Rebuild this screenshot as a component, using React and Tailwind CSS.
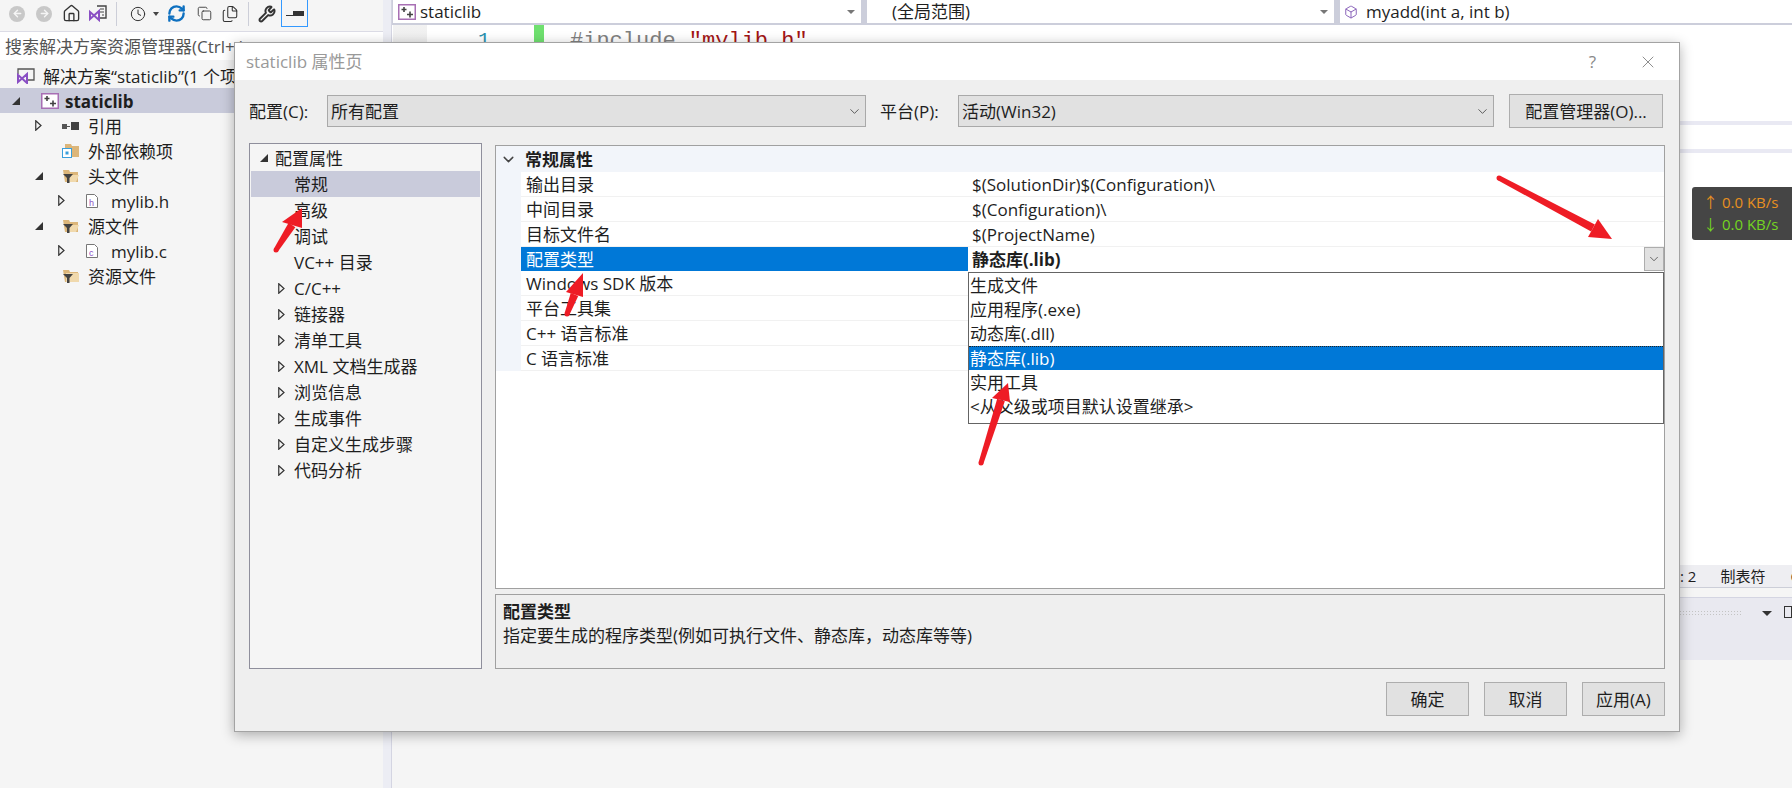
import React from "react";
import { Clock, Copy, Files, Home, RefreshCw, Wrench, ArrowLeft, ArrowRight, ChevronDown, X, Box } from "lucide-react";

const VsMark = ({ x = 0, y = 0 }) => (
  <g transform={`translate(${x} ${y})`} fill="none" stroke="#8a4fc4" strokeWidth="2">
    <path d="M1 3 L5 6.5 L1 10 Z M5 6.5 L10 2 V11 Z" />
  </g>
);

const FilterFolder = ({ open = true }) => (
  <svg width="18" height="16" viewBox="0 0 18 16">
    <path d="M1 2h6l1 2h8v10H3z" fill="#dcb67a" />
    <path d={open ? "M5 7h12l-3 7H5z" : "M4 5h13v9H4z"} fill="#f0d9ad" />
    <path d="M1 6h10L7.5 10v5H5v-5z" fill="#424242" />
  </svg>
);

const ExtFolder = () => (
  <svg width="18" height="16" viewBox="0 0 18 16">
    <path d="M3 1h6l1 2h7v11H3z" fill="#dcb67a" />
    <rect x="0.5" y="5.5" width="9" height="9" fill="#fff" stroke="#3a9fdc" />
    <rect x="3.5" y="8.5" width="3" height="3" fill="#3a9fdc" />
  </svg>
);

const FileIcon = ({ ch }) => (
  <svg width="14" height="16" viewBox="0 0 14 16">
    <path d="M1.5 1.5h8l3 3v10h-11z" fill="#fff" stroke="#777" />
    <text x="4" y="12.5" fontSize="9" fontFamily="Liberation Sans" fill="#8a4fc4">{ch}</text>
  </svg>
);

const RefIcon = () => (
  <svg width="18" height="10" viewBox="0 0 18 10">
    <rect x="0" y="3" width="5" height="5" fill="#555" />
    <rect x="5" y="5" width="3" height="1" fill="#555" />
    <rect x="9" y="1" width="8" height="8" fill="#424242" />
  </svg>
);

const ProjectIcon = ({ size = 18 }) => (
  <svg width={size} height={size - 2} viewBox="0 0 18 16">
    <rect x="0.75" y="0.75" width="16.5" height="14.5" fill="#fff" stroke="#a86fb4" strokeWidth="1.5" />
    <path d="M3.5 5.5h5M6 3v5" stroke="#424242" strokeWidth="1.6" />
    <path d="M9 10.5h6M12 7.5v6" stroke="#424242" strokeWidth="1.6" />
  </svg>
);

const Filled = () => (
  <svg width="8" height="8" viewBox="0 0 8 8"><path d="M0 8 L8 8 L8 0 Z" fill="#333" /></svg>
);
const Hollow = () => (
  <svg width="7" height="11" viewBox="0 0 7 11"><path d="M0.75 0.75 L6 5.5 L0.75 10.25 Z" fill="none" stroke="#333" strokeWidth="1.2" /></svg>
);

const TreeRow = ({ indent, caret, icon, label, selected, bold }) => (
  <div className={`flex items-center h-[25px] ${indent} ${selected ? "bg-[#c9cbdb]" : ""}`}>
    <span className="w-[27px] flex items-center">{caret === "open" ? <Filled /> : caret === "closed" ? <Hollow /> : null}</span>
    <span className="w-[26px] flex items-center">{icon}</span>
    <span className={`pt-[2px] ${bold ? "font-bold" : ""}`}>{label}</span>
  </div>
);

const NavBox = ({ className, icon, label, arrow = true }) => (
  <div className={`flex items-center h-[23px] bg-white ${className}`}>
    {icon}
    <span>{label}</span>
    {arrow && <span className="ml-auto mr-[6px] w-0 h-0 border-x-[4px] border-x-transparent border-t-[4px] border-t-[#777]" />}
  </div>
);

const Select = ({ className, label }) => (
  <div className={`flex items-center justify-between h-[32px] pl-[3px] pr-[3px] bg-[#e1e1e1] border border-[#a9a9a9] ${className}`}>
    <span>{label}</span>
    <ChevronDown size={15} strokeWidth={1.1} color="#222" />
  </div>
);

const FootBtn = ({ label }) => (
  <div className="flex items-center justify-center w-[83px] h-[34px] bg-[#e1e1e1] border border-[#adadad]">{label}</div>
);

const treeItems = [
  { t: "配置属性", lvl: 0, caret: "open" },
  { t: "常规", lvl: 1, sel: true },
  { t: "高级", lvl: 1 },
  { t: "调试", lvl: 1 },
  { t: "VC++ 目录", lvl: 1 },
  { t: "C/C++", lvl: 1, caret: "closed" },
  { t: "链接器", lvl: 1, caret: "closed" },
  { t: "清单工具", lvl: 1, caret: "closed" },
  { t: "XML 文档生成器", lvl: 1, caret: "closed" },
  { t: "浏览信息", lvl: 1, caret: "closed" },
  { t: "生成事件", lvl: 1, caret: "closed" },
  { t: "自定义生成步骤", lvl: 1, caret: "closed" },
  { t: "代码分析", lvl: 1, caret: "closed" },
];

const props = [
  ["输出目录", "$(SolutionDir)$(Configuration)\\"],
  ["中间目录", "$(Configuration)\\"],
  ["目标文件名", "$(ProjectName)"],
  ["配置类型", "静态库(.lib)", true],
  ["Windows SDK 版本", ""],
  ["平台工具集", ""],
  ["C++ 语言标准", ""],
  ["C 语言标准", ""],
];

const options = ["生成文件", "应用程序(.exe)", "动态库(.dll)", "静态库(.lib)", "实用工具", "<从父级或项目默认设置继承>"];

const Arrow = ({ tail, tip, a, b }) => {
  const nx = (a[0] + b[0]) / 2;
  const ny = (a[1] + b[1]) / 2;
  const dx = nx - tail[0];
  const dy = ny - tail[1];
  const len = Math.hypot(dx, dy);
  const px = -dy / len;
  const py = dx / len;
  const pts = [
    [tail[0] + px * 2.5, tail[1] + py * 2.5],
    [nx + px * 4, ny + py * 4],
    [nx - px * 4, ny - py * 4],
    [tail[0] - px * 2.5, tail[1] - py * 2.5],
  ].map((p) => p.join(",")).join(" ");
  return (
    <g fill="#ee1c25">
      <circle cx={tail[0]} cy={tail[1]} r="2.5" />
      <polygon points={pts} />
      <polygon points={`${tip[0]},${tip[1]} ${a[0]},${a[1]} ${b[0]},${b[1]}`} />
    </g>
  );
};

export default function App() {
  return (
    <div className="relative flex w-[1792px] h-[788px] overflow-hidden bg-[#f5f5f5] text-[17px] leading-none text-[#1e1e1e] font-['Open_Sans','Noto_Sans_CJK_SC',sans-serif]">
      {/* Solution explorer */}
      <aside className="w-[383px] shrink-0 flex flex-col">
        <div className="h-[32px] pb-[4px] flex items-center border-b border-[#dcdce6]">
          <span className="ml-[9px] w-[16px] h-[16px] rounded-full bg-[#c8c8c8] flex items-center justify-center"><ArrowLeft size={11} color="#f5f5f5" strokeWidth={3} /></span>
          <span className="ml-[11px] w-[16px] h-[16px] rounded-full bg-[#c8c8c8] flex items-center justify-center"><ArrowRight size={11} color="#f5f5f5" strokeWidth={3} /></span>
          <Home className="ml-[10px]" size={19} color="#333" strokeWidth={1.7} />
          <svg className="ml-[8px]" width="19" height="17" viewBox="0 0 19 17">
            <VsMark x={0} y={4} />
            <path d="M8 1h9v12h-6" fill="none" stroke="#444" strokeWidth="1.4" />
            <path d="M11 4h4M11 7h4M13 10h2" stroke="#444" />
          </svg>
          <span className="ml-[8px] w-px h-[24px] bg-[#ccced8]" />
          <Clock className="ml-[13px]" size={16} color="#333" strokeWidth={1.5} />
          <span className="ml-[7px] w-0 h-0 border-x-[3.5px] border-x-transparent border-t-[4px] border-t-[#444]" />
          <RefreshCw className="ml-[8px]" size={19} color="#0e70c0" strokeWidth={3} />
          <Copy className="ml-[11px]" size={15} color="#333" strokeWidth={1.4} />
          <Files className="ml-[9px]" size={18} color="#333" strokeWidth={1.4} />
          <span className="ml-[9px] w-px h-[24px] bg-[#ccced8]" />
          <Wrench className="ml-[9px]" size={18} color="#333" strokeWidth={2.6} />
          <span className="ml-[5px] self-start w-[27px] h-[27px] border border-[#3399ff] border-t-0 flex items-center justify-center">
            <span className="w-[18px] h-[5px] flex items-end"><span className="w-[7px] h-px bg-[#333]" /><span className="w-[11px] h-[5px] bg-[#333]" /></span>
          </span>
        </div>
        <div className="h-[28px] bg-white flex items-center pl-[5px] text-[#555] whitespace-nowrap">搜索解决方案资源管理器(Ctrl+;)</div>
        <div className="pt-[3px]">
          <div className="flex items-center h-[25px] pl-[17px]">
            <svg className="mr-[8px]" width="18" height="16" viewBox="0 0 18 16">
              <path d="M1 6V1h16v11h-6" fill="none" stroke="#555" strokeWidth="1.3" />
              <VsMark x={0} y={4} />
            </svg>
            <span className="pt-[2px] whitespace-nowrap">解决方案“staticlib”(1 个项目)</span>
          </div>
          <TreeRow indent="pl-[12px]" caret="open" icon={<span className="ml-[2px]"><ProjectIcon /></span>} label="staticlib" selected bold />
          <TreeRow indent="pl-[35px]" caret="closed" icon={<RefIcon />} label="引用" />
          <TreeRow indent="pl-[35px]" icon={<ExtFolder />} label="外部依赖项" />
          <TreeRow indent="pl-[35px]" caret="open" icon={<FilterFolder />} label="头文件" />
          <TreeRow indent="pl-[58px]" caret="closed" icon={<FileIcon ch="h" />} label="mylib.h" />
          <TreeRow indent="pl-[35px]" caret="open" icon={<FilterFolder />} label="源文件" />
          <TreeRow indent="pl-[58px]" caret="closed" icon={<FileIcon ch="c" />} label="mylib.c" />
          <TreeRow indent="pl-[35px]" icon={<FilterFolder open={false} />} label="资源文件" />
        </div>
      </aside>

      {/* Splitter */}
      <div className="w-[9px] shrink-0 bg-[#ecedf4] border-r border-[#d4d5e2]" />

      {/* Editor column */}
      <main className="relative flex-1 flex flex-col min-w-0">
        <div className="h-[25px] bg-[#ccceDB] flex gap-[6px] pl-px shrink-0">
          <NavBox className="w-[468px] pl-[5px]" icon={<span className="mr-[4px]"><ProjectIcon size={18} /></span>} label="staticlib" />
          <NavBox className="w-[467px] pl-[25px]" label="(全局范围)" />
          <NavBox className="flex-1 pl-[4px]" arrow={false} icon={<Box className="mr-[8px]" size={14} color="#7a4fb0" strokeWidth={1.5} />} label="myadd(int a, int b)" />
        </div>
        <div className="h-[96px] bg-white flex shrink-0">
          <div className="ml-px w-[34px] h-full bg-linear-to-b from-[#f2f2f2] to-[#dcdcdc]" />
          <div className="w-[107px] text-right pr-[44px] pt-[6px] text-[#2b91af] font-['Liberation_Mono',monospace] text-[20px]">1</div>
          <div className="w-[10px] h-[24px] bg-[#6fe06f]" />
          <div className="ml-[26px] pt-[6px] font-['Liberation_Mono',monospace] text-[22px] whitespace-nowrap text-[#808080]">
            #include <span className="text-[#a31515]">"mylib.h"</span>
          </div>
        </div>
        <div className="h-[4px] bg-[#e9e9f3] shrink-0" />
        <div className="h-[24px] bg-white shrink-0" />
        <div className="h-[4px] bg-[#e9e9f3] shrink-0" />
        <div className="flex-1 bg-white" />
        <div className="h-[23px] bg-[#eeeef2] border-b border-[#ccced8] flex items-center text-[15px] shrink-0 pl-[1288px] whitespace-nowrap overflow-hidden">
          <span>: 2</span>
          <span className="ml-[24px]">制表符</span>
          <span className="ml-[25px]">C</span>
        </div>
        <div className="h-[9px] shrink-0" />
        <div className="h-[63px] bg-[#e9e9f0] border-t border-[#d4d5e2] shrink-0 flex items-start">
          <span className="ml-[1287px] mt-[12px] w-[70px] h-[5px] bg-[radial-gradient(#c4c4c4_1px,transparent_1px)] bg-[length:3px_3px]" />
          <span className="ml-[19px] mt-[13px] w-0 h-0 border-x-[5px] border-x-transparent border-t-[5px] border-t-[#333]" />
          <span className="ml-[12px] mt-[8px] w-[8px] h-[12px] border border-[#333]" />
        </div>
        <div className="h-[128px] shrink-0" />

        {/* Net speed widget */}
        <div className="absolute left-[1300px] top-[187px] w-[100px] h-[53px] bg-[#454545] rounded-l-[3px] flex flex-col justify-center gap-[7px] pl-[11px] text-[15px]">
          <div className="text-[#e89020] whitespace-nowrap">↑ 0.0 KB/s</div>
          <div className="text-[#74d421] whitespace-nowrap">↓ 0.0 KB/s</div>
        </div>
      </main>

      {/* Property dialog */}
      <div className="absolute left-[234px] top-[42px] w-[1446px] h-[690px] flex flex-col bg-[#efefef] border border-[#a3a3a3] shadow-[0_3px_12px_rgba(0,0,0,0.3)]">
        <div className="h-[37px] bg-white flex items-center pl-[11px] text-[#999] shrink-0">
          <span>staticlib 属性页</span>
          <span className="ml-auto text-[#888] text-[17px]">?</span>
          <X className="ml-[42px] mr-[21px]" size={20} color="#777" strokeWidth={1} />
        </div>
        <div className="flex items-center h-[34px] mt-[14px] pl-[14px] shrink-0">
          <span className="w-[78px]">配置(C):</span>
          <Select className="w-[539px]" label="所有配置" />
          <span className="ml-[14px] w-[78px]">平台(P):</span>
          <Select className="w-[536px]" label="活动(Win32)" />
          <div className="ml-[15px] w-[154px] h-[34px] flex items-center justify-center bg-[#e1e1e1] border border-[#adadad]">配置管理器(O)...</div>
        </div>
        <div className="flex pl-[14px] mt-[15px] shrink-0">
          <div className="w-[233px] h-[526px] bg-[#f5f5f5] border border-[#8f8f9c] pt-[1px] px-[1px]">
            {treeItems.map((it) => (
              <div key={it.t} className={`h-[26px] flex items-center ${it.sel ? "bg-[#c9cbdb]" : ""}`}>
                <span className={`flex items-center ${it.lvl === 0 ? "w-[24px] pl-[9px]" : "w-[43px] pl-[27px]"}`}>
                  {it.caret === "open" ? <Filled /> : it.caret === "closed" ? <Hollow /> : null}
                </span>
                <span className="whitespace-nowrap">{it.t}</span>
              </div>
            ))}
          </div>
          <div className="ml-[13px] w-[1170px] mt-[2px] flex flex-col">
            <div className="relative h-[444px] bg-white border border-[#a0a0a0]">
              <div className="h-[26px] bg-[#f2f5fa] flex items-center">
                <ChevronDown className="ml-[4px]" size={17} color="#444" strokeWidth={2} />
                <span className="ml-[8px] pt-px font-bold">常规属性</span>
              </div>
              <div className="bg-[#f2f5fa] pl-[25px]">
                {props.map(([name, val, sel], i) => (
                  <div key={name} className={`flex bg-white ${i === 3 ? "h-[24px]" : "h-[25px] border-b border-[#f1f1f1]"}`}>
                    <div className={`w-[447px] flex items-center pl-[5px] whitespace-nowrap ${sel ? "bg-[#0078d7] text-white" : ""}`}>{name}</div>
                    <div className={`flex-1 flex items-center pl-[4px] ${sel ? "font-bold" : ""}`}>
                      <span>{val}</span>
                      {sel && (
                        <span className="ml-auto w-[20px] h-[24px] bg-[#e1e1e1] border border-[#adadad] flex items-center justify-center">
                          <ChevronDown size={14} strokeWidth={1.1} color="#222" />
                        </span>
                      )}
                    </div>
                  </div>
                ))}
              </div>
              {/* Open combo list */}
              <div className="absolute left-[472px] top-[126px] w-[696px] h-[152px] bg-white border border-[#646464] whitespace-nowrap">
                {options.map((o, i) => (
                  <div key={o} className={`h-[24.3px] flex items-center pl-px ${i === 3 ? "bg-[#0078d7] text-white border-t border-dotted border-[#222]" : ""}`}>{o}</div>
                ))}
              </div>
            </div>
            <div className="mt-[5px] h-[75px] bg-[#efefef] border border-[#a0a0a0] pl-[7px] pt-[6px]">
              <div className="h-[20px] flex items-center font-bold">配置类型</div>
              <div className="mt-[4px] h-[20px] flex items-center whitespace-nowrap">指定要生成的程序类型(例如可执行文件、静态库，动态库等等)</div>
            </div>
          </div>
        </div>
        <div className="flex justify-end gap-[15px] pr-[14px] mt-[13px]">
          <FootBtn label="确定" />
          <FootBtn label="取消" />
          <FootBtn label="应用(A)" />
        </div>
      </div>

      {/* Red annotation arrows */}
      <svg className="absolute inset-0 pointer-events-none" width="1792" height="788" viewBox="0 0 1792 788">
        <Arrow tail={[276, 250]} tip={[302, 208]} a={[282, 222]} b={[302, 228]} />
        <Arrow tail={[567, 314]} tip={[583, 273]} a={[566, 292]} b={[583, 297]} />
        <Arrow tail={[981, 463]} tip={[1008, 383]} a={[992, 398]} b={[1010, 402]} />
        <Arrow tail={[1499, 178]} tip={[1612, 239]} a={[1598, 219]} b={[1588, 237]} />
      </svg>
    </div>
  );
}
